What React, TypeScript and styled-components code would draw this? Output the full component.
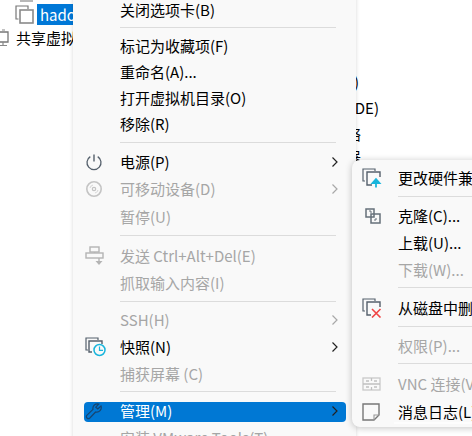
import React from "react";
import styled, { createGlobalStyle } from "styled-components";

const Global = createGlobalStyle`
  html, body { margin: 0; padding: 0; background: #fff; }
  body { font-family: "Noto Sans CJK SC", "Noto Sans", sans-serif; font-size: 15px; color: #000; }
`;

const Page = styled.div`
  position: relative;
  width: 472px;
  height: 436px;
  overflow: hidden;
  background: #fff;
  display: flex;
`;

const Tree = styled.div`
  width: 200px;
  flex: none;
  display: flex;
  flex-direction: column;
  gap: 2px;
`;

const TreeStub = styled.div`
  height: 2px;
  margin-left: 20px;
  width: 13px;
  background: #b8b8b8;
`;

const TreeRow = styled.div<{ $indent: number }>`
  height: 21px;
  padding-left: ${(p) => p.$indent}px;
  display: flex;
  align-items: center;
  gap: 3px;
  line-height: 21px;
  white-space: nowrap;
`;

const TreeLabel = styled.span<{ $selected?: boolean }>`
  padding: 0 3px;
  height: 21px;
  background: ${(p) => (p.$selected ? "#0078d7" : "transparent")};
  color: ${(p) => (p.$selected ? "#fff" : "#000")};
`;

const Details = styled.div`
  flex: 1;
  padding-top: 71px;
  display: flex;
  flex-direction: column;
`;

const DetailLine = styled.div<{ $end: number; $h?: number }>`
  width: ${(p) => p.$end}px;
  height: ${(p) => p.$h ?? 26}px;
  line-height: 22px;
  text-align: right;
  white-space: nowrap;
  color: #000;
`;

const Menu = styled.div`
  position: absolute;
  left: 73px;
  top: -3px;
  width: 283px;
  height: 460px;
  box-sizing: border-box;
  padding: 0 10px 0 11px;
  display: flex;
  flex-direction: column;
  background: #f9f9f9;
  box-shadow: 0 0 4px rgba(0, 0, 0, 0.16);
`;

const SubMenu = styled.div`
  position: absolute;
  left: 352px;
  top: 160px;
  width: 200px;
  height: 267px;
  box-sizing: border-box;
  padding: 5px 0 0;
  display: flex;
  flex-direction: column;
  background: #f9f9f9;
  border-radius: 8px;
  box-shadow: 0 1px 7px rgba(0, 0, 0, 0.24);
  &::after {
    content: "";
    position: absolute;
    left: 42px;
    right: 0;
    top: 262px;
    height: 2px;
    background: #fdfdfd;
  }
`;

const Row = styled.div<{ $h?: number; $disabled?: boolean; $active?: boolean }>`
  height: ${(p) => p.$h ?? 27}px;
  flex: none;
  box-sizing: border-box;
  padding-bottom: 2px;
  display: flex;
  align-items: center;
  border-radius: 4px;
  color: ${(p) => (p.$active ? "#fff" : p.$disabled ? "#a6a6a6" : "#000")};
  background: ${(p) => (p.$active ? "#0078d4" : "transparent")};
  white-space: nowrap;
`;

const IconSlot = styled.span`
  width: 35px;
  padding-left: 1px;
  flex: none;
  display: flex;
  align-items: center;
  svg { display: block; }
`;

const Label = styled.span`
  flex: 1;
  line-height: 20px;
`;

const Chevron = styled.span`
  width: 15px;
  flex: none;
  display: flex;
  svg { display: block; }
`;

const Sep = styled.div<{ $inset: number; $right: number; $above: number; $below: number }>`
  height: 1px;
  flex: none;
  margin: ${(p) => p.$above}px ${(p) => p.$right}px ${(p) => p.$below}px ${(p) => p.$inset}px;
  background: #dcdcdc;
`;

const SubIconSlot = styled.span`
  width: 36px;
  padding-left: 10px;
  flex: none;
  display: flex;
  svg { display: block; }
`;

const Arrow = ({ dim }: { dim?: boolean }) => (
  <Chevron>
    <svg width="8" height="12" viewBox="0 0 8 12" fill="none">
      <path d="M1.5 1.5 L6 6 L1.5 10.5" stroke={dim ? "#a8a8a8" : "#222"} strokeWidth="1.2" />
    </svg>
  </Chevron>
);

const TwoSquares = () => (
  <svg width="19" height="19" viewBox="0 0 19 19" fill="none">
    <path d="M3.5 14 H1 V1 H13 V4" stroke="#777" strokeWidth="1.2" />
    <rect x="5" y="5" width="13" height="13" stroke="#8a8a8a" strokeWidth="1.6" />
  </svg>
);

const SharedIcon = () => (
  <svg width="10" height="18" viewBox="0 0 10 18" fill="none">
    <path d="M-3 3 H8 V13 H-3 Z" stroke="#777" strokeWidth="1.3" />
    <path d="M2 1 H5 M3 13 V16 M-1 16.5 H7" stroke="#888" strokeWidth="1.2" />
  </svg>
);

const Power = () => (
  <svg width="18" height="18" viewBox="0 0 18 18" fill="none">
    <path d="M5.3 3.6 A7 7 0 1 0 12.7 3.6" stroke="#55606c" strokeWidth="1.3" />
    <path d="M9 1.5 V8.5" stroke="#55606c" strokeWidth="1.4" />
  </svg>
);

const Disc = () => (
  <svg width="18" height="18" viewBox="0 0 18 18" fill="none">
    <circle cx="9" cy="9" r="7.2" stroke="#c4c4c4" strokeWidth="1.6" />
    <circle cx="9" cy="9" r="1.7" stroke="#c4c4c4" strokeWidth="1.2" />
    <path d="M5 8 A4 4 0 0 1 8 5 M13 10 A4 4 0 0 1 10 13" stroke="#d8d8d8" strokeWidth="1.1" />
  </svg>
);

const SendKeys = () => (
  <svg width="20" height="20" viewBox="0 0 20 20" fill="none">
    <rect x="5" y="1" width="9" height="5" stroke="#b4b4b4" strokeWidth="1.4" />
    <rect x="1" y="7" width="17" height="5" stroke="#b4b4b4" strokeWidth="1.4" />
    <path d="M9.5 6 V7 M14 12 V18" stroke="#b4b4b4" strokeWidth="1.4" />
    <path d="M10.5 15 L14 19 L17.5 15 Z" fill="#b4b4b4" />
  </svg>
);

const Snapshot = () => (
  <svg width="22" height="20" viewBox="0 0 22 20" fill="none">
    <path d="M3 13 H1 V1 H13 V3" stroke="#55606c" strokeWidth="1.2" />
    <path d="M7 15 H4 V4 H17 V7" stroke="#55606c" strokeWidth="1.4" />
    <circle cx="14.5" cy="13" r="5.5" stroke="#19b5dc" strokeWidth="1.5" />
    <path d="M14.5 9.5 V13.3 H18" stroke="#19b5dc" strokeWidth="1.2" />
  </svg>
);

const Wrench = () => (
  <svg width="18" height="18" viewBox="0 0 18 18" fill="none">
    <path
      d="M16 4 L12.8 7 L10.8 5.2 L13.8 2 A4.6 4.6 0 0 0 8 7.4 L1.8 13.4 A2 2 0 0 0 4.6 16.2 L10.6 10 A4.6 4.6 0 0 0 16 4 Z"
      stroke="#17446f"
      strokeWidth="1.2"
    />
  </svg>
);

const Upgrade = () => (
  <svg width="20" height="20" viewBox="0 0 20 20" fill="none">
    <path d="M3 13 H1 V1 H13 V3" stroke="#55606c" strokeWidth="1.2" />
    <path d="M10 17 H5 V4 H18 V9" stroke="#55606c" strokeWidth="1.4" />
    <path d="M14 19.5 V12 M10.5 15 L14 11 L17.5 15 Z" stroke="#19b5dc" strokeWidth="1.8" fill="#19b5dc" />
  </svg>
);

const Clone = () => (
  <svg width="20" height="16" viewBox="-3 0 20 16" fill="none">
    <rect x="1" y="1" width="8" height="8" stroke="#66707a" strokeWidth="1.5" />
    <rect x="6" y="6" width="9" height="9" stroke="#66707a" strokeWidth="1.5" />
    <path d="M4 3 H6 V5 M11 10 V12 H9" stroke="#66707a" strokeWidth="1" />
  </svg>
);

const DeleteDisk = () => (
  <svg width="20" height="20" viewBox="0 0 20 20" fill="none">
    <path d="M3 13 H1 V1 H13 V3" stroke="#55606c" strokeWidth="1.2" />
    <path d="M9 17 H5 V4 H18 V9" stroke="#55606c" strokeWidth="1.4" />
    <path d="M10 11 L18.5 19.5 M18.5 11 L10 19.5" stroke="#f04545" strokeWidth="1.6" />
  </svg>
);

const Vnc = () => (
  <svg width="20" height="16" viewBox="0 0 20 16" fill="none">
    <rect x="1" y="2" width="17" height="12" stroke="#c9c9c9" strokeWidth="1.3" />
    <path d="M1 8 H18 M9.5 2 V5 M9.5 11 V14 M4 5 H7 M12 5 H15 M4 11 H7 M12 11 H15" stroke="#c0c0c0" strokeWidth="1.3" />
  </svg>
);

const Note = () => (
  <svg width="18" height="18" viewBox="0 0 18 18" fill="none">
    <path d="M1 1 H17 V12 L12 17 H1 Z" stroke="#777" strokeWidth="1.4" />
    <path d="M17 12 H12 V17" stroke="#999" strokeWidth="1.1" />
  </svg>
);

export default function App() {
  return (
    <Page>
      <Global />
      <Tree>
        <TreeStub />
        <TreeRow $indent={15}>
          <TwoSquares />
          <TreeLabel $selected>hadoop</TreeLabel>
        </TreeRow>
        <TreeRow $indent={0}>
          <SharedIcon />
          <TreeLabel>共享虚拟机</TreeLabel>
        </TreeRow>
      </Tree>
      <Details>
        <DetailLine $end={159}>(D)</DetailLine>
        <DetailLine $end={179}>(IDE)</DetailLine>
        <DetailLine $end={161} $h={23}>络</DetailLine>
        <DetailLine $end={161}>器</DetailLine>
      </Details>
      <Menu>
        <Row><IconSlot /><Label>关闭选项卡(B)</Label></Row>
        <Sep $inset={36} $right={10} $above={3} $below={6} />
        <Row $h={26}><IconSlot /><Label>标记为收藏项(F)</Label></Row>
        <Row $h={26}><IconSlot /><Label>重命名(A)...</Label></Row>
        <Row $h={26}><IconSlot /><Label>打开虚拟机目录(O)</Label></Row>
        <Row $h={26}><IconSlot /><Label>移除(R)</Label></Row>
        <Sep $inset={36} $right={10} $above={4} $below={6} />
        <Row><IconSlot><Power /></IconSlot><Label>电源(P)</Label><Arrow /></Row>
        <Row $h={28} $disabled><IconSlot><Disc /></IconSlot><Label>可移动设备(D)</Label><Arrow dim /></Row>
        <Row $h={28} $disabled><IconSlot /><Label>暂停(U)</Label></Row>
        <Sep $inset={36} $right={10} $above={3} $below={7} />
        <Row $disabled><IconSlot><SendKeys /></IconSlot><Label>发送 Ctrl+Alt+Del(E)</Label></Row>
        <Row $disabled><IconSlot /><Label>抓取输入内容(I)</Label></Row>
        <Sep $inset={36} $right={10} $above={4} $below={5} />
        <Row $disabled><IconSlot /><Label>SSH(H)</Label><Arrow dim /></Row>
        <Row><IconSlot><Snapshot /></IconSlot><Label>快照(N)</Label><Arrow /></Row>
        <Row $disabled><IconSlot /><Label>捕获屏幕 (C)</Label></Row>
        <Sep $inset={36} $right={10} $above={3} $below={10} />
        <Row $active $h={20}><IconSlot><Wrench /></IconSlot><Label>管理(M)</Label><Arrow /></Row>
        <Row $disabled $h={34}><IconSlot /><Label>安装 VMware Tools(T)...</Label></Row>
      </Menu>
      <SubMenu>
        <Row><SubIconSlot><Upgrade /></SubIconSlot><Label>更改硬件兼容性(H)...</Label></Row>
        <Sep $inset={46} $right={0} $above={4} $below={6} />
        <Row><SubIconSlot><Clone /></SubIconSlot><Label>克隆(C)...</Label></Row>
        <Row><SubIconSlot /><Label>上载(U)...</Label></Row>
        <Row $disabled><SubIconSlot /><Label>下载(W)...</Label></Row>
        <Sep $inset={46} $right={0} $above={3} $below={7} />
        <Row><SubIconSlot><DeleteDisk /></SubIconSlot><Label>从磁盘中删除(D)...</Label></Row>
        <Sep $inset={46} $right={0} $above={4} $below={6} />
        <Row $disabled><SubIconSlot /><Label>权限(P)...</Label></Row>
        <Sep $inset={46} $right={0} $above={3} $below={7} />
        <Row $h={28} $disabled><SubIconSlot><Vnc /></SubIconSlot><Label>VNC 连接(V)</Label></Row>
        <Row><SubIconSlot><Note /></SubIconSlot><Label>消息日志(L)</Label></Row>
      </SubMenu>
    </Page>
  );
}
